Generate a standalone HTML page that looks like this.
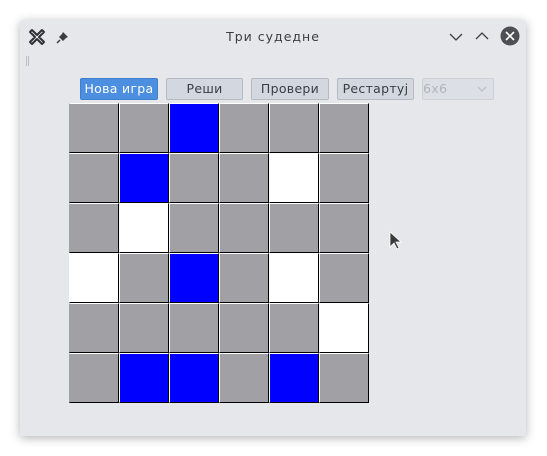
<!DOCTYPE html>
<html><head><meta charset="utf-8"><style>
body{margin:0;width:547px;height:456px;background:#fff;position:relative;overflow:hidden;font-family:"DejaVu Sans","Liberation Sans",sans-serif}
#win{position:absolute;left:20px;top:20px;width:506px;height:416px;background:#e6e7eb;box-shadow:0 2px 10px rgba(0,0,0,.3);border-radius:3px 3px 0 0}
.title{position:absolute;left:0;right:0;top:9px;text-align:center;font-size:12.5px;color:#3a3d42;letter-spacing:1px}
.btn{position:absolute;top:58px;height:20px;border:1px solid #b6bac2;border-radius:2px;background:#d3d8e0;font-size:12.5px;color:#3a3d42;text-align:center;line-height:20px;box-sizing:content-box;letter-spacing:.3px}
.cell{position:absolute;width:48px;height:48px;border-right:1px solid #000;border-bottom:1px solid #000;border-left:1px solid #fff;border-top:1px solid #fff}
.g{background:#a1a0a4}.b{background:#0000ff}.w{background:#fff}
</style></head><body>
<div id="win">
<svg style="position:absolute;left:8px;top:8px" width="18" height="18" viewBox="0 0 18 18"><path d="M4 2 L9 7 L14 2 L16 4 L11 9 L16 14 L14 16 L9 11 L4 16 L2 14 L7 9 L2 4Z" fill="#e6e7eb" stroke="#2f3136" stroke-width="2" stroke-linejoin="round"/></svg>
<svg style="position:absolute;left:36px;top:10px" width="14" height="14" viewBox="0 0 14 14"><path d="M7 2 L12 7 L10 8 L7 11 L3 7 L6 4Z" fill="#3a3d42"/><path d="M4 10 L1 13" stroke="#3a3d42" stroke-width="1.5"/></svg>
<div class="title">Три судедне</div>
<svg style="position:absolute;left:429px;top:12px" width="14" height="10"><path d="M1 2 L7 8 L13 2" fill="none" stroke="#3a3d42" stroke-width="1.3"/></svg>
<svg style="position:absolute;left:455px;top:11px" width="14" height="10"><path d="M1 8 L7 2 L13 8" fill="none" stroke="#3a3d42" stroke-width="1.3"/></svg>
<svg style="position:absolute;left:480px;top:6px" width="20" height="20"><circle cx="10" cy="10" r="9.5" fill="#4d4f55"/><path d="M6 6 L14 14 M14 6 L6 14" stroke="#fff" stroke-width="1.6"/></svg>
<div style="position:absolute;left:6px;top:36px;width:1px;height:10px;border-left:1px solid #bbb;border-right:1px solid #bbb"></div>
<div class="btn" style="left:60px;width:76px;background:#4c8fe0;border-color:#3f7fcc;color:#fff">Нова игра</div>
<div class="btn" style="left:146px;width:75px">Реши</div>
<div class="btn" style="left:231px;width:76px">Провери</div>
<div class="btn" style="left:317px;width:75px">Рестартуј</div>
<div class="btn" style="left:402px;width:70px;background:#dcdfe5;border-color:#cdd0d6;color:#b0b4bb;text-align:left;padding-left:0">6x6<svg style="position:absolute;right:6px;top:6px" width="10" height="8"><path d="M1 2 L5 6 L9 2" fill="none" stroke="#b8bcc3" stroke-width="1.2"/></svg></div>
</div>
<div id="grid"></div>
<svg style="position:absolute;left:389px;top:231px" width="14" height="20"><path d="M1 1 L1 16 L5 12 L8 18 L10 17 L7 11 L12 11Z" fill="#3a3a3a" stroke="#fff" stroke-width="0.8"/></svg>
<script>
var p=["ggbggg","gbggwg","gwgggg","wgbgwg","gggggw","gbbgbg"],h="";
for(var r=0;r<6;r++)for(var c=0;c<6;c++)h+='<div class="cell '+p[r][c]+'" style="left:'+(69+50*c)+'px;top:'+(103+50*r)+'px;'+(c==0?'border-left-color:'+(p[r][c]=='w'?'#fff':'#a1a0a4')+';':'')+'"></div>';
document.getElementById('grid').innerHTML=h;
</script>
</body></html>
